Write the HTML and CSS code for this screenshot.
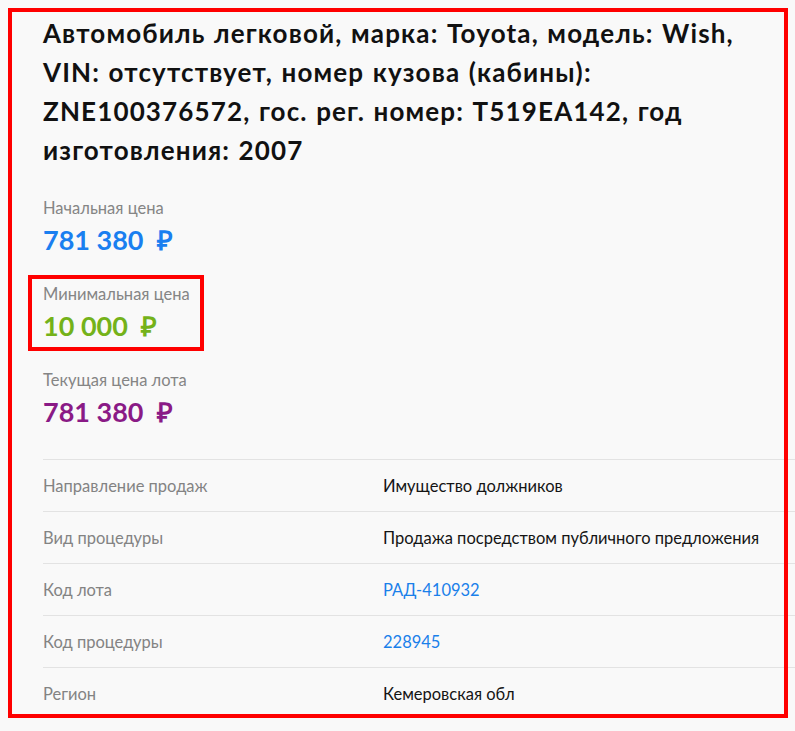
FILE: index.html
```html
<!DOCTYPE html>
<html lang="ru">
<head>
<meta charset="utf-8">
<link rel="stylesheet" href="styles.css">
</head>
<body>
<div class="page">
  <h1 class="title">Автомобиль легковой, марка: Toyota, модель: Wish, VIN: отсутствует, номер кузова (кабины): ZNE100376572, гос. рег. номер: Т519ЕА142, год изготовления: 2007</h1>

  <div class="prices">
    <div class="price">
      <div class="price-label">Начальная цена</div>
      <div class="price-value blue">781 380 &nbsp;₽</div>
    </div>
    <div class="price highlighted">
      <div class="price-label">Минимальная цена</div>
      <div class="price-value green">10 000 &nbsp;₽</div>
    </div>
    <div class="price">
      <div class="price-label">Текущая цена лота</div>
      <div class="price-value purple">781 380 &nbsp;₽</div>
    </div>
  </div>

  <div class="table">
    <div class="row"><div class="cell-label">Направление продаж</div><div class="cell-value">Имущество должников</div></div>
    <div class="row"><div class="cell-label">Вид процедуры</div><div class="cell-value">Продажа посредством публичного предложения</div></div>
    <div class="row"><div class="cell-label">Код лота</div><div class="cell-value link">РАД-410932</div></div>
    <div class="row"><div class="cell-label">Код процедуры</div><div class="cell-value link">228945</div></div>
    <div class="row"><div class="cell-label">Регион</div><div class="cell-value">Кемеровская обл</div></div>
  </div>
</div>
<div class="annotation"></div>
</body>
</html>
```

FILE: styles.css
```css
html, body {
  margin: 0;
  padding: 0;
  background: #f9f9f9;
}
body {
  font-family: "Lato", "Open Sans", sans-serif;
  color: #1a1a1a;
  width: 795px;
  height: 731px;
  overflow: hidden;
  position: relative;
}
.page {
  padding: 14px 0 0 43px;
}
.title {
  margin: 0;
  width: 712px;
  font-size: 26px;
  line-height: 39px;
  font-weight: 700;
  letter-spacing: 1.15px;
  word-spacing: 1px;
  color: #111;
}
.prices {
  margin-top: 28px;
  display: flex;
  flex-direction: column;
  gap: 27px;
}
.price {
  position: relative;
  width: 150px;
}
.price-label {
  font-size: 16.5px;
  line-height: 20px;
  color: #858585;
}
.price-value {
  font-size: 27px;
  line-height: 34px;
  font-weight: 700;
  margin-top: 5px;
}
.blue { color: #1a7ff0; }
.green { color: #74b21a; }
.purple { color: #8a1a86; }
.highlighted::after {
  content: "";
  position: absolute;
  left: -15px;
  top: -9px;
  width: 168px;
  height: 68px;
  border: 4px solid #ff0000;
}
.table {
  margin-top: 30px;
}
.row {
  display: flex;
  align-items: center;
  height: 51px;
  border-top: 1px solid #e3e3e3;
  font-size: 16.5px;
}
.cell-label {
  width: 340px;
  color: #838383;
}
.cell-value {
  color: #141414;
}
.link { color: #1a80ea; }
.annotation {
  position: absolute;
  left: 8px;
  top: 8px;
  width: 772px;
  height: 702px;
  border: 4px solid #ff0000;
}
```
